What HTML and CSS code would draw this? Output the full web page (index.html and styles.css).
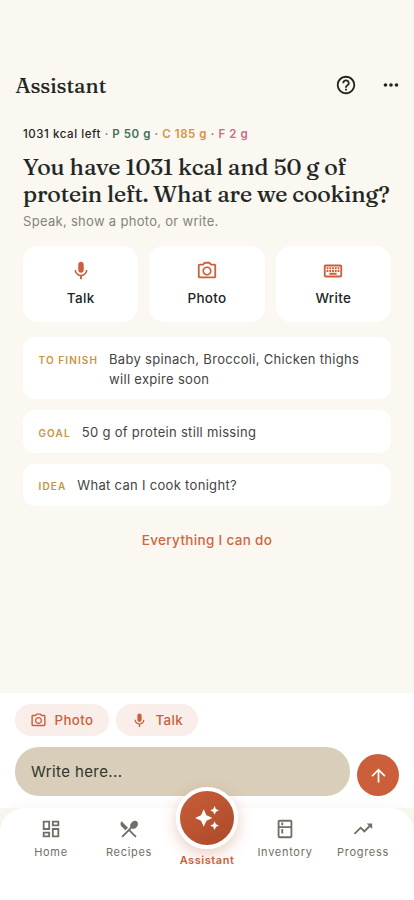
FILE: index.html
```html
<!DOCTYPE html>
<html lang="en">
<head>
<meta charset="utf-8">
<meta name="viewport" content="width=device-width, initial-scale=1">
<title>Assistant</title>
<link rel="stylesheet" href="styles.css">
</head>
<body>
<svg class="symbols" aria-hidden="true">
  <symbol id="mic" viewBox="0 0 24 24"><path d="M12 14c1.660 0 3-1.340 3-3V5c0-1.660-1.340-3-3-3S9 3.340 9 5v6c0 1.660 1.340 3 3 3z"/><path d="M17.300 11c0 3-2.540 5.100-5.300 5.100S6.700 14 6.700 11H5c0 3.410 2.720 6.230 6 6.720V21h2v-3.280c3.280-.48 6-3.300 6-6.720h-1.700z"/></symbol>
  <symbol id="camera" viewBox="0 0 24 24"><path d="M20 4h-3.170L15 2H9L7.170 4H4c-1.100 0-2 .9-2 2v12c0 1.100.9 2 2 2h16c1.100 0 2-.9 2-2V6c0-1.100-.9-2-2-2zm0 14H4V6h4.050l1.830-2h4.240l1.830 2H20v12zM12 7c-2.760 0-5 2.240-5 5s2.240 5 5 5 5-2.240 5-5-2.240-5-5-5zm0 8.200c-1.770 0-3.200-1.430-3.200-3.200s1.430-3.200 3.200-3.200 3.200 1.430 3.200 3.200-1.430 3.200-3.200 3.200z"/></symbol>
</svg>
<div class="app">
  <header class="topbar">
    <h1>Assistant</h1>
    <div class="actions">
      <svg viewBox="0 0 24 24"><path d="M11 18h2v-2h-2v2zm1-16C6.480 2 2 6.480 2 12s4.480 10 10 10 10-4.480 10-10S17.520 2 12 2zm0 18c-4.410 0-8-3.590-8-8s3.590-8 8-8 8 3.590 8 8-3.590 8-8 8zm0-14c-2.210 0-4 1.790-4 4h2c0-1.100.9-2 2-2s2 .9 2 2c0 2-3 1.750-3 5h2c0-2.250 3-2.500 3-5 0-2.210-1.790-4-4-4z"/></svg>
      <svg viewBox="0 0 24 24"><circle cx="6" cy="12" r="2"/><circle cx="12" cy="12" r="2"/><circle cx="18" cy="12" r="2"/></svg>
    </div>
  </header>
  <main>
    <p class="macros">1031 kcal left <i>·</i> <span class="protein">P 50 g</span> <i>·</i> <span class="carbs">C 185 g</span> <i>·</i> <span class="fat">F 2 g</span></p>
    <h2>You have 1031 kcal and 50 g of<br>protein left. What are we cooking?</h2>
    <p class="hint">Speak, show a photo, or write.</p>
    <div class="modes">
      <button><svg><use href="#mic"/></svg>Talk</button>
      <button><svg><use href="#camera"/></svg>Photo</button>
      <button><svg viewBox="0 0 24 24"><path d="M20 5H4c-1.100 0-2 .9-2 2v10c0 1.100.9 2 2 2h16c1.100 0 2-.9 2-2V7c0-1.100-.9-2-2-2zm0 12H4V7h16v10zM11 8h2v2h-2zm0 3h2v2h-2zM8 8h2v2H8zm0 3h2v2H8zm-3 0h2v2H5zm0-3h2v2H5zm3 6h8v2H8zm6-3h2v2h-2zm0-3h2v2h-2zm3 3h2v2h-2zm0-3h2v2h-2z"/></svg>Write</button>
    </div>
    <div class="suggestions">
      <div class="suggestion"><b>TO FINISH</b><span>Baby spinach, Broccoli, Chicken thighs<br>will expire soon</span></div>
      <div class="suggestion"><b>GOAL</b><span>50 g of protein still missing</span></div>
      <div class="suggestion"><b>IDEA</b><span>What can I cook tonight?</span></div>
    </div>
    <a class="more">Everything I can do</a>
  </main>
  <section class="composer">
    <div class="chips">
      <button><svg><use href="#camera"/></svg>Photo</button>
      <button><svg><use href="#mic"/></svg>Talk</button>
    </div>
    <div class="entry">
      <div class="field">Write here...</div>
      <button class="send"><svg viewBox="0 0 24 24"><path d="M4 12l1.410 1.410L11 7.830V20h2V7.830l5.580 5.590L20 12l-8-8-8 8z"/></svg></button>
    </div>
  </section>
  <div class="dock">
    <nav>
      <a><svg viewBox="0 0 24 24"><path d="M19 5v2h-4V5h4M9 5v6H5V5h4m10 8v6h-4v-6h4M9 17v2H5v-2h4M21 3h-8v6h8V3zM11 3H3v10h8V3zm10 8h-8v10h8V11zm-10 4H3v6h8v-6z"/></svg>Home</a>
      <a><svg viewBox="0 0 24 24"><path d="M8.100 13.340l2.830-2.830L3.910 3.500c-1.560 1.560-1.560 4.090 0 5.660l4.190 4.180zm6.780-1.810c1.530.71 3.680.21 5.270-1.380 1.910-1.910 2.280-4.650.81-6.120-1.460-1.460-4.200-1.100-6.120.81-1.590 1.590-2.090 3.740-1.380 5.270L3.700 19.870l1.410 1.410L12 14.410l6.880 6.880 1.410-1.410L13.410 13l1.470-1.470z"/></svg>Recipes</a>
      <a class="active"><span class="fab"><svg viewBox="0 0 24 24"><path d="M19 9l1.250-2.750L23 5l-2.750-1.250L19 1l-1.250 2.750L15 5l2.750 1.250zM11.500 9.500L9 4 6.500 9.500 1 12l5.500 2.500L9 20l2.500-5.500L17 12zM19 15l-1.250 2.750L15 19l2.750 1.250L19 23l1.250-2.750L23 19l-2.750-1.250z"/></svg></span>Assistant</a>
      <a><svg viewBox="0 0 24 24"><path d="M18 2H6c-1.100 0-2 .9-2 2v16c0 1.100.9 2 2 2h12c1.100 0 2-.9 2-2V4c0-1.100-.9-2-2-2zm0 18H6v-9h12v9zm0-11H6V4h12v5zM8 5h2v3H8zm0 7h2v5H8z"/></svg>Inventory</a>
      <a><svg viewBox="0 0 24 24"><path d="M16 6l2.290 2.290-4.880 4.880-4-4L2 16.590 3.410 18l6-6 4 4 6.300-6.290L22 12V6z"/></svg>Progress</a>
    </nav>
  </div>
</div>
</body>
</html>
```
FILE: styles.css
```css
* { box-sizing: border-box; }
body { margin: 0; font-family: Inter, sans-serif; color: #20251f; background: #fbf8f1; }
h1, h2, p { margin: 0; }
button { border: 0; font: inherit; color: inherit; padding: 0; }
svg { display: block; fill: currentColor; }
.symbols { position: absolute; width: 0; height: 0; }
.app { height: 900px; display: flex; flex-direction: column; overflow: hidden; }
.topbar { margin-top: 61px; height: 48px; padding: 0 12px 0 15.500px; display: flex; align-items: center; justify-content: space-between; }
h1, h2 { font-family: Fraunces, "Liberation Serif", serif; font-weight: 500; -webkit-text-stroke: .2px currentColor; }
h1 { font-size: 21px; letter-spacing: 0; line-height: 28px; margin-bottom: 1px; }
.actions { display: flex; gap: 23px; }
.actions svg { width: 22px; height: 22px; }
main { flex: 1; padding: 17px 23px 0; }
.macros { font-size: 11.500px; line-height: 16px; font-weight: 500; letter-spacing: .56px; white-space: nowrap; }
.macros i { font-style: normal; color: #77736a; }
.protein { color: #42705c; font-weight: 600; }
.carbs { color: #cf963f; font-weight: 600; }
.fat { color: #c5708a; font-weight: 600; }
h2 { margin-top: 12px; font-size: 23px; line-height: 27px; letter-spacing: -.1px; white-space: nowrap; }
.hint { margin-top: 4px; font-size: 13px; line-height: 18px; letter-spacing: .3px; color: #85827a; }
.modes { display: grid; grid-template-columns: repeat(3, 1fr); gap: 11px; margin-top: 16px; }
.modes button { height: 76px; border-radius: 15px; background: #fff; display: flex; flex-direction: column; align-items: center; justify-content: center; gap: 7px; padding-bottom: 1px; font-size: 13.500px; line-height: 18px; font-weight: 500; letter-spacing: .3px; }
.modes svg { width: 22px; height: 22px; fill: #cb5f3a; }
.suggestions { display: flex; flex-direction: column; gap: 10.800px; margin-top: 15px; }
.suggestion { background: #fff; border-radius: 12px; padding: 11.700px 15.500px 10.800px; display: flex; gap: 11px; font-size: 13px; line-height: 20px; letter-spacing: .31px; color: #43453f; }
.suggestion b { font-size: 10px; font-weight: 600; letter-spacing: 1.120px; color: #c89443; padding-top: 1px; margin-bottom: -1px; white-space: nowrap; }
.suggestion span { white-space: nowrap; }
.more { display: block; text-align: center; margin-top: 23.500px; font-size: 13.500px; line-height: 20px; font-weight: 500; letter-spacing: .32px; color: #d06543; }
.composer { height: 115px; background: #fff; padding: 11px 15px 0; }
.chips { display: flex; gap: 7.500px; }
.chips button { height: 32px; border-radius: 16px; background: #f9eeea; color: #cb5f3a; padding: 0 15px; display: flex; align-items: center; gap: 7.500px; font-size: 13.300px; font-weight: 500; letter-spacing: .4px; }
.chips svg { width: 17px; height: 17px; }
.entry { display: flex; gap: 7px; align-items: flex-end; margin-top: 11px; }
.field { flex: 1; height: 49px; border-radius: 24px; background: #d9ceb9; padding: 0 16px; line-height: 50px; font-size: 15px; letter-spacing: .4px; color: #30342b; }
.send { width: 42px; height: 42px; border-radius: 50%; background: #cb5f3a; color: #fff; display: grid; place-items: center; }
.send svg { width: 21px; height: 21px; }
.dock { height: 92px; background: #fbf8f1; }
nav { height: 92px; background: #fff; border-radius: 24px 24px 0 0; box-shadow: 0 -3px 12px rgba(70, 50, 30, .035); padding: 0 12px; display: grid; grid-template-columns: repeat(5, 1fr); }
nav a { display: flex; flex-direction: column; align-items: center; padding-top: 10px; gap: 4px; font-size: 11px; line-height: 16px; font-weight: 400; letter-spacing: .7px; color: #716f64; }
nav svg { width: 22px; height: 22px; }
nav .active { padding-top: 0; margin-top: -21px; gap: 3px; color: #cb5f3a; font-weight: 600; letter-spacing: .55px; }
.fab { width: 62px; height: 62px; border-radius: 50%; border: 4px solid #fff; background: linear-gradient(145deg, #cb5f3a, #a94828); background-origin: border-box; color: #fff; display: grid; place-items: center; box-shadow: 0 5px 15px rgba(190, 85, 50, .3); }
.fab svg { width: 26px; height: 26px; }
```
